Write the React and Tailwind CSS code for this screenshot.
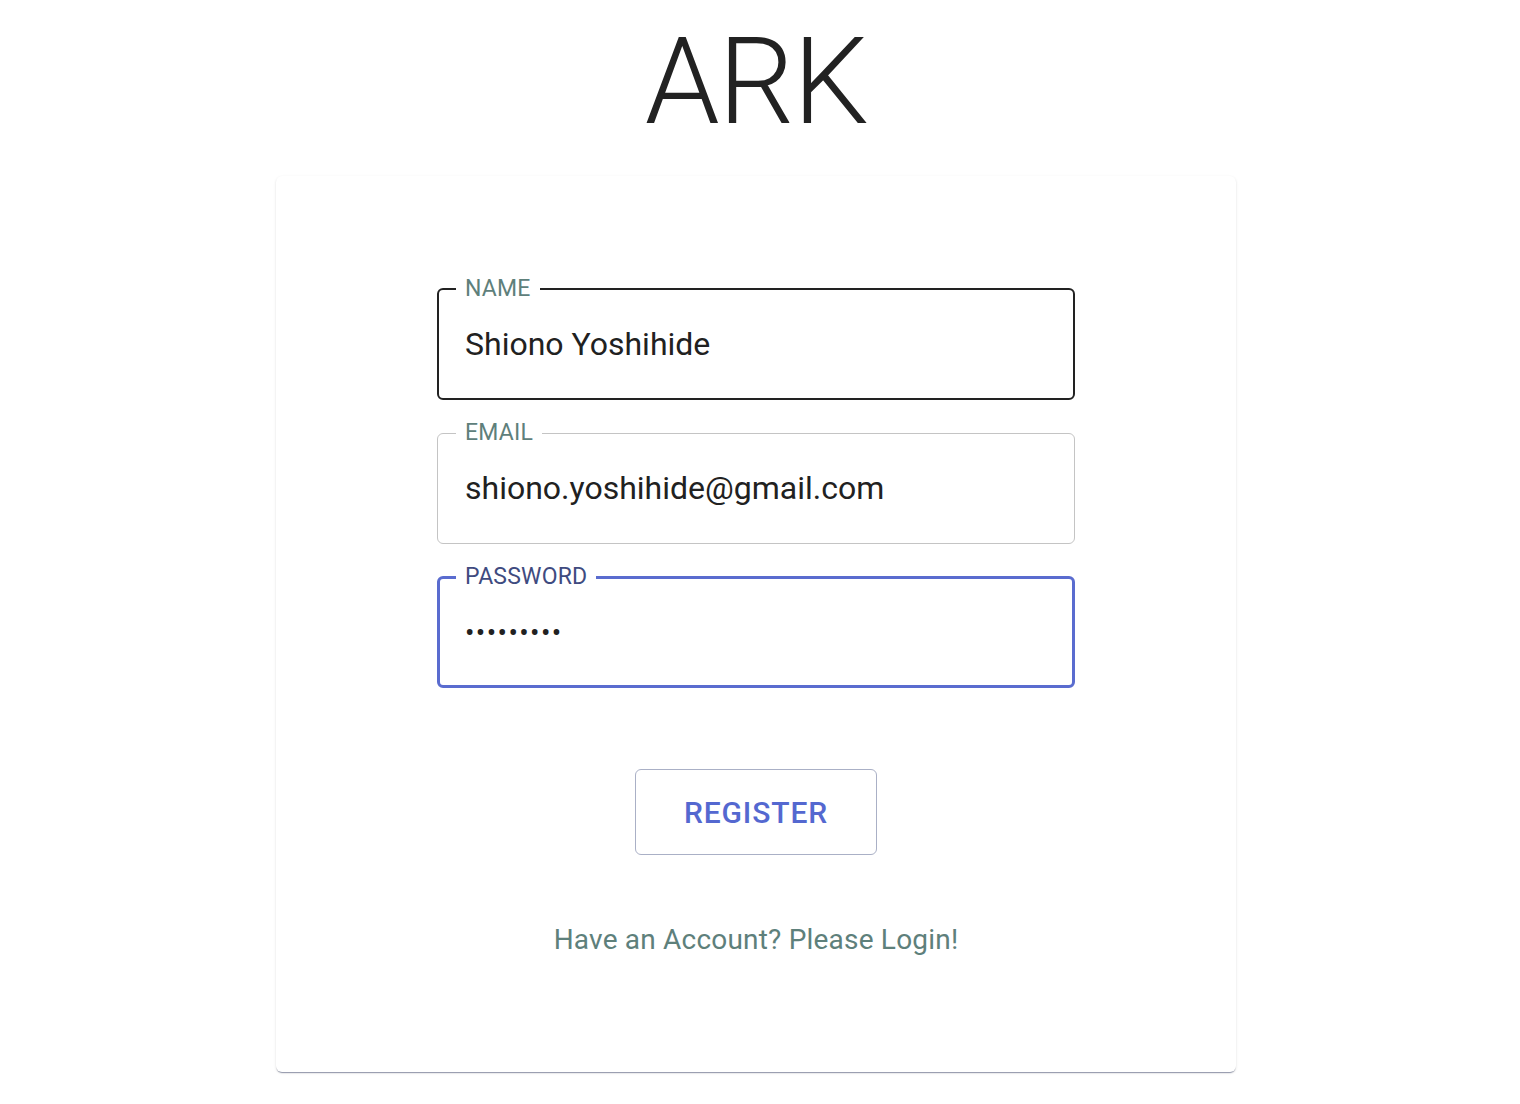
import React from "react";

const font = { fontFamily: "Roboto, 'Noto Sans', sans-serif" };

function Field({ label, value, type = "text", variant }) {
  const border =
    variant === "active"
      ? "border-2 border-[#222222] px-[17px]"
      : variant === "focus"
      ? "border-[3px] border-[#5a6ccf] px-[16px]"
      : "border border-[#c4c4c4] px-[18px]";
  const labelColor = variant === "focus" ? "text-[#3f4b80]" : "text-[#5e807b]";
  return (
    <fieldset className={`${border} h-[123px] rounded-[6px] m-0`}>
      <legend className={`px-[9px] text-[23px] leading-[24px] tracking-[0.2px] ${labelColor}`}>{label}</legend>
      <input
        type={type}
        defaultValue={value}
        readOnly
        className={`block w-full h-[64px] mt-[11px] pl-[9px] outline-none bg-transparent text-[#212121] ${
          type === "password" ? "text-[28px] tracking-[1.4px]" : "text-[32px]"
        }`}
        style={font}
      />
    </fieldset>
  );
}

export default function App() {
  return (
    <div className="min-h-[1104px] bg-white flex flex-col items-center pr-[8px]" style={font}>
      <div className="pt-[22px] h-[142px] text-[120px] leading-[120px] font-light text-[#222222] tracking-[-1.5px] mb-[34px]">
        ARK
      </div>
      <div className="w-[960px] h-[896px] rounded-[6px] bg-white shadow-[0_2px_1px_-1px_rgba(80,90,130,0.5),0_1px_1px_0_rgba(0,0,0,0.1),0_1px_3px_0_rgba(0,0,0,0.1)] flex flex-col items-center pt-[101px]">
        <div className="w-[638px] flex flex-col gap-[21px]">
          <Field label="NAME" value="Shiono Yoshihide" variant="active" />
          <Field label="EMAIL" value="shiono.yoshihide@gmail.com" />
          <Field label="PASSWORD" value="shionoyos" type="password" variant="focus" />
        </div>
        <button className="mt-[81px] w-[242px] h-[86px] rounded-[6px] border-[1.5px] border-[#aab0c6] text-[#5468d0] text-[30px] font-medium tracking-[0.9px] bg-white">
          REGISTER
        </button>
        <a className="mt-[69px] text-[28px] leading-[32px] text-[#5e807b] tracking-[0.2px] cursor-pointer">
          Have an Account? Please Login!
        </a>
      </div>
    </div>
  );
}
